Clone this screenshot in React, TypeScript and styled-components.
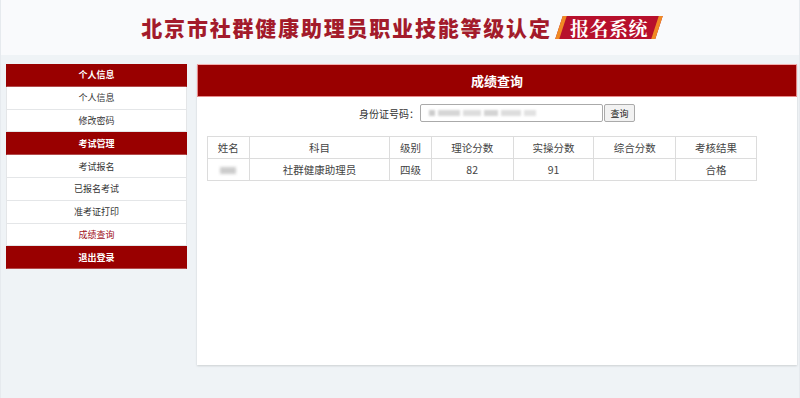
import React from "react";
import styled, { createGlobalStyle } from "styled-components";

const GlobalStyle = createGlobalStyle`
  html, body {
    margin: 0;
    padding: 0;
    background: #eff3f6;
    font-family: "Noto Sans CJK SC", "Liberation Sans", sans-serif;
  }
`;

const Page = styled.div`
  width: 800px;
  height: 398px;
  box-sizing: border-box;
  border-left: 1px solid #e6eaee;
  border-right: 1px solid #e6eaee;
  background: #eff3f6;
  overflow: hidden;
`;

const Header = styled.div`
  height: 55px;
  background: #f9fafc;
  display: flex;
  align-items: center;
  justify-content: center;
`;

const Title = styled.h1`
  margin: 0;
  font-size: 21px;
  font-weight: 900;
  color: #a31b2b;
  letter-spacing: 1.8px;
  line-height: 1;
`;

const Badge = styled.div`
  margin-left: 7px;
  height: 23px;
  padding: 0 7px;
  display: flex;
  align-items: center;
  background: #b7102c;
  border-left: 4px solid #f08a24;
  border-right: 4px solid #f08a24;
  transform: skewX(-18deg);
`;

const BadgeText = styled.span`
  display: block;
  transform: skewX(18deg);
  color: #fff;
  font-family: "Noto Serif CJK SC", "Noto Sans CJK SC", serif;
  font-size: 19px;
  font-weight: 700;
  letter-spacing: 0.5px;
`;

const Body = styled.div`
  display: flex;
  gap: 10px;
  padding: 9px 2px 0 5px;
`;

const Sidebar = styled.nav`
  width: 181px;
  flex-shrink: 0;
  display: flex;
  flex-direction: column;
`;

const NavItem = styled.div<{ $head?: boolean; $active?: boolean }>`
  height: 21.8px;
  display: flex;
  align-items: center;
  justify-content: center;
  font-size: 9px;
  font-weight: ${(p) => (p.$head ? 700 : 400)};
  color: ${(p) => (p.$head ? "#fff" : p.$active ? "#a0101c" : "#333")};
  background: ${(p) => (p.$head ? "#990000" : "#fff")};
  border-bottom: 1px solid ${(p) => (p.$head ? "#b24c4c" : "#e4e6e8")};
  border-left: 1px solid ${(p) => (p.$head ? "#990000" : "#e4e6e8")};
  border-right: 1px solid ${(p) => (p.$head ? "#990000" : "#e4e6e8")};
`;

const Main = styled.section`
  flex: 1;
  height: 301px;
  background: #fff;
  box-shadow: 0 1px 2px rgba(0, 0, 0, 0.15);
`;

const MainHead = styled.div`
  height: 33px;
  background: #990000;
  border: 1px solid #e88a8a;
  border-top-color: #f3b0b0;
  box-sizing: border-box;
  display: flex;
  align-items: center;
  justify-content: center;
  color: #fff;
  font-size: 13px;
  font-weight: 700;
`;

const SearchRow = styled.div`
  display: flex;
  align-items: center;
  justify-content: center;
  height: 18px;
  margin-top: 7px;
  font-size: 10px;
  color: #333;
`;

const Input = styled.div`
  width: 183px;
  height: 18px;
  box-sizing: border-box;
  border: 1px solid #aaa;
  border-radius: 2px;
  margin-left: 1px;
  display: flex;
  align-items: center;
  padding-left: 8px;
  gap: 3px;
`;

const Blur = styled.span<{ $w: number; $shade: string }>`
  display: inline-block;
  width: ${(p) => p.$w}px;
  height: 6px;
  background: ${(p) => p.$shade};
  filter: blur(1px);
`;

const Button = styled.button`
  height: 18px;
  width: 31px;
  padding: 0;
  margin-left: 1px;
  border: 1px solid #aaa;
  border-radius: 2px;
  background: #f2f2f2;
  font-family: inherit;
  font-size: 9px;
  color: #222;
`;

const Table = styled.table`
  margin: 14px 0 0 10px;
  width: 550px;
  border-collapse: collapse;
  font-size: 10.5px;
  color: #444;
`;

const Cell = styled.td<{ $w?: number }>`
  width: ${(p) => (p.$w ? `${p.$w}px` : "auto")};
  height: 21px;
  padding: 0;
  text-align: center;
  border: 1px solid #dcdcdc;
`;

const NameBlur = styled.span`
  display: inline-block;
  width: 16px;
  height: 7px;
  background: #ccc;
  filter: blur(1.5px);
`;

const menu = [
  { label: "个人信息", head: true },
  { label: "个人信息" },
  { label: "修改密码" },
  { label: "考试管理", head: true },
  { label: "考试报名" },
  { label: "已报名考试" },
  { label: "准考证打印" },
  { label: "成绩查询", active: true },
  { label: "退出登录", head: true },
];

const columns = [
  { label: "姓名", w: 41 },
  { label: "科目", w: 142 },
  { label: "级别", w: 41 },
  { label: "理论分数", w: 82 },
  { label: "实操分数", w: 81 },
  { label: "综合分数", w: 82 },
  { label: "考核结果", w: 81 },
];

function App() {
  return (
    <>
      <GlobalStyle />
      <Page>
        <Header>
          <Title>北京市社群健康助理员职业技能等级认定</Title>
          <Badge>
            <BadgeText>报名系统</BadgeText>
          </Badge>
        </Header>
        <Body>
          <Sidebar>
            {menu.map((m, i) => (
              <NavItem key={i} $head={m.head} $active={m.active}>
                {m.label}
              </NavItem>
            ))}
          </Sidebar>
          <Main>
            <MainHead>成绩查询</MainHead>
            <SearchRow>
              身份证号码：
              <Input>
                <Blur $w={6} $shade="#ccc" />
                <Blur $w={22} $shade="#d6d6d6" />
                <Blur $w={18} $shade="#ddd" />
                <Blur $w={14} $shade="#d4d4d4" />
                <Blur $w={20} $shade="#ddd" />
                <Blur $w={12} $shade="#e2e2e2" />
              </Input>
              <Button>查询</Button>
            </SearchRow>
            <Table>
              <tbody>
                <tr>
                  {columns.map((c) => (
                    <Cell key={c.label} $w={c.w}>
                      {c.label}
                    </Cell>
                  ))}
                </tr>
                <tr>
                  <Cell>
                    <NameBlur />
                  </Cell>
                  <Cell>社群健康助理员</Cell>
                  <Cell>四级</Cell>
                  <Cell>82</Cell>
                  <Cell>91</Cell>
                  <Cell></Cell>
                  <Cell>合格</Cell>
                </tr>
              </tbody>
            </Table>
          </Main>
        </Body>
      </Page>
    </>
  );
}

export default App;
